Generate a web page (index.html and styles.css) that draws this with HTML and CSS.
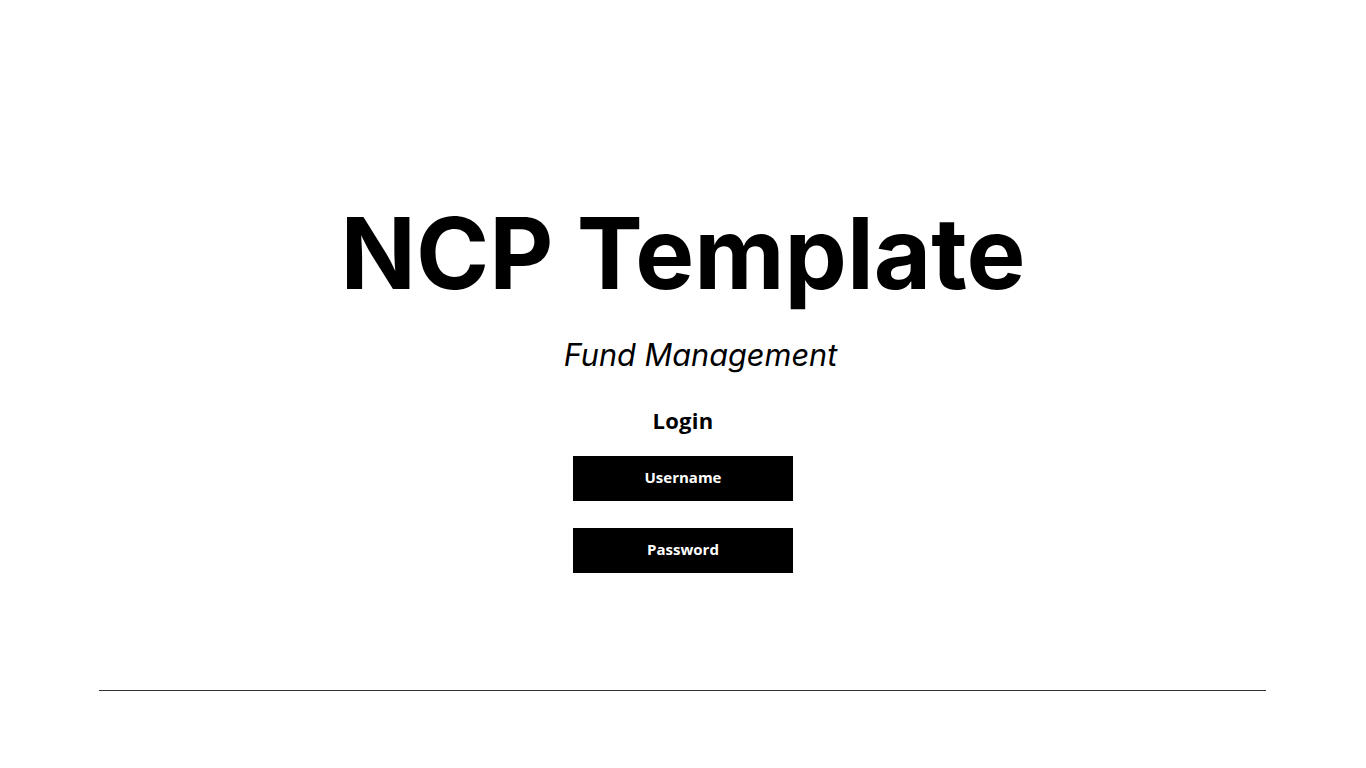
FILE: index.html
```html
<!DOCTYPE html>
<html lang="en">
<head>
<meta charset="utf-8">
<title>NCP Template</title>
<link rel="stylesheet" href="styles.css">
</head>
<body>
<main class="page">
  <section class="hero">
    <h1 class="title">NCP Template</h1>
    <p class="subtitle">Fund Management</p>
    <h2 class="login-heading">Login</h2>
    <form class="login-form">
      <button type="button" class="field-btn">Username</button>
      <button type="button" class="field-btn">Password</button>
    </form>
  </section>
  <hr class="rule">
</main>
</body>
</html>
```

FILE: styles.css
```css
html, body {
  margin: 0;
  padding: 0;
  background: #ffffff;
}

.page {
  width: 1366px;
  height: 768px;
  display: flex;
  flex-direction: column;
  align-items: center;
  box-sizing: border-box;
  padding-top: 203px;
}

.hero {
  display: flex;
  flex-direction: column;
  align-items: center;
}

.title {
  margin: 0;
  font-family: Inter, "Liberation Sans", sans-serif;
  font-weight: 700;
  font-size: 99px;
  line-height: 100px;
  letter-spacing: 0;
  color: #000;
}

.subtitle {
  margin: 34px 0 0 35px;
  font-family: Inter, "Liberation Sans", sans-serif;
  font-style: italic;
  font-weight: 400;
  font-size: 30.7px;
  line-height: 36px;
  color: #000;
}

.login-heading {
  margin: 33px 0 0 0;
  font-family: "Open Sans", Inter, sans-serif;
  font-weight: 700;
  font-size: 22px;
  line-height: 28px;
  letter-spacing: 0.3px;
  color: #000;
}

.login-form {
  margin-top: 22px;
  display: flex;
  flex-direction: column;
  gap: 27px;
}

.field-btn {
  width: 220px;
  height: 45px;
  border: 0;
  padding: 0 0 4px 0;
  background: #000;
  color: #fff;
  font-family: "Open Sans", Inter, sans-serif;
  font-weight: 700;
  font-size: 15px;
  cursor: pointer;
}

.rule {
  margin: 117px 0 0 99px;
  width: 1167px;
  height: 0;
  border: 0;
  border-top: 1px solid #333;
  align-self: flex-start;
}
```
